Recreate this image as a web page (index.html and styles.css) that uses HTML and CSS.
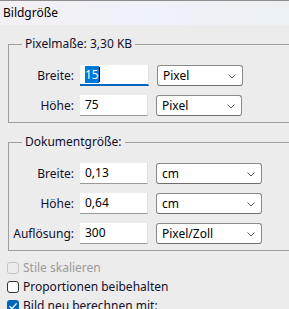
FILE: index.html
```html
<!DOCTYPE html>
<html lang="de">
<head>
    <meta charset="UTF-8">
    <title>Bildgröße</title>
    <link rel="stylesheet" href="styles.css">
</head>
<body>
    <div class="titlebar">Bildgröße</div>

    <div class="dialog">
        <fieldset class="group">
            <legend>Pixelmaße: 3,30 KB</legend>
            <div class="row">
                <label>Breite:</label>
                <div class="field focused"><span class="selected">15</span><span class="caret"></span></div>
                <div class="select small">Pixel<svg class="chevron" width="8" height="5" viewBox="0 0 8 5"><path d="M0.5 0.5 L4 4 L7.5 0.5" fill="none" stroke="#5a5a5a" stroke-width="1"/></svg></div>
            </div>
            <div class="row">
                <label>Höhe:</label>
                <div class="field">75</div>
                <div class="select small">Pixel<svg class="chevron" width="8" height="5" viewBox="0 0 8 5"><path d="M0.5 0.5 L4 4 L7.5 0.5" fill="none" stroke="#5a5a5a" stroke-width="1"/></svg></div>
            </div>
        </fieldset>

        <fieldset class="group">
            <legend>Dokumentgröße:</legend>
            <div class="row">
                <label>Breite:</label>
                <div class="field">0,13</div>
                <div class="select">cm<svg class="chevron" width="8" height="5" viewBox="0 0 8 5"><path d="M0.5 0.5 L4 4 L7.5 0.5" fill="none" stroke="#5a5a5a" stroke-width="1"/></svg></div>
            </div>
            <div class="row">
                <label>Höhe:</label>
                <div class="field">0,64</div>
                <div class="select">cm<svg class="chevron" width="8" height="5" viewBox="0 0 8 5"><path d="M0.5 0.5 L4 4 L7.5 0.5" fill="none" stroke="#5a5a5a" stroke-width="1"/></svg></div>
            </div>
            <div class="row">
                <label>Auflösung:</label>
                <div class="field">300</div>
                <div class="select">Pixel/Zoll<svg class="chevron" width="8" height="5" viewBox="0 0 8 5"><path d="M0.5 0.5 L4 4 L7.5 0.5" fill="none" stroke="#5a5a5a" stroke-width="1"/></svg></div>
            </div>
        </fieldset>

        <div class="checks">
            <div class="check disabled"><span class="box"></span>Stile skalieren</div>
            <div class="check"><span class="box"></span>Proportionen beibehalten</div>
            <div class="check"><span class="box checked"><svg width="12" height="12" viewBox="0 0 12 12"><path d="M2.5 6.2 L5 8.6 L9.6 3.4" fill="none" stroke="#fff" stroke-width="1.4"/></svg></span>Bild neu berechnen mit:</div>
        </div>
    </div>
</body>
</html>
```

FILE: styles.css
```css
* {
    box-sizing: border-box;
}

html, body {
    overflow: hidden;
}

body {
    margin: 0;
    background: #ececec;
    color: #10102e;
    font-family: 'Noto Sans', 'Segoe UI', sans-serif;
    font-size: 12px;
}

.titlebar {
    height: 25px;
    padding-left: 3px;
    line-height: 24px;
    border-top: 1px solid #8c8c8c;
    background: linear-gradient(to right, #f4eff4, #eef2f9 50%, #ecf1f5);
    color: #000;
}

.dialog {
    width: 330px;
}

.group {
    margin: 11px 0 0 8px;
    padding: 13px 0 6px 0;
    border: 1px solid #a0a0a0;
}

.group + .group {
    margin-top: 11px;
}

.group legend {
    margin-left: 13px;
    padding: 0 3px;
    line-height: 16px;
}

.row {
    display: flex;
    align-items: center;
    height: 21px;
}

.row + .row {
    margin-top: 9px;
}

.row label {
    width: 65px;
    margin-right: 6px;
    text-align: right;
}

.field {
    width: 68px;
    height: 21px;
    padding-left: 5px;
    line-height: 20px;
    background: #fff;
    border-bottom: 1px solid #9a9a9a;
    border-right: 1px solid #e0e0e0;
    color: #000;
}

.field.focused {
    width: 69px;
    border-bottom: 2px solid #0067c0;
}

.selected {
    background: #0078d7;
    color: #fff;
}

.caret {
    display: inline-block;
    width: 1px;
    height: 15px;
    vertical-align: -3px;
    background: #000;
}

.select {
    position: relative;
    width: 106px;
    height: 21px;
    margin-left: 8px;
    padding-left: 5px;
    line-height: 19px;
    background: #fff;
    border: 1px solid #8a8a8a;
    border-bottom-color: #6e6e6e;
    border-radius: 3px;
    color: #000;
}

.select.small {
    width: 86px;
}

.chevron {
    position: absolute;
    right: 6px;
    top: 8px;
}

.checks {
    margin-top: 7px;
    padding-left: 7px;
}

.check {
    display: flex;
    align-items: center;
    height: 19px;
}

.check .box {
    width: 12px;
    height: 12px;
    margin-right: 4px;
    border: 1px solid #333;
    border-radius: 3px;
    background: #fff;
}

.check.disabled {
    color: #9a9a9a;
}

.check.disabled .box {
    border-color: #c4c4c4;
    background: #ececec;
}

.check .box.checked {
    border: none;
    background: #0067c0;
}

.check .box.checked svg {
    display: block;
}
```
